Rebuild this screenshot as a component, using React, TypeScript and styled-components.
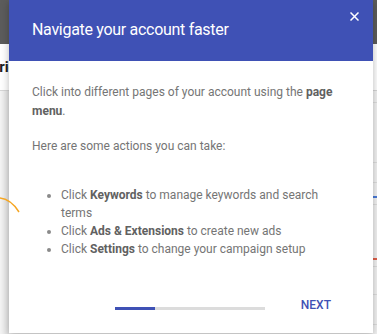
import React from 'react';
import styled, { createGlobalStyle } from 'styled-components';

const GlobalStyle = createGlobalStyle`
  html, body {
    margin: 0;
    padding: 0;
    background: #eeeeee;
    font-family: Roboto, "Noto Sans", Arial, sans-serif;
  }
`;

const Page = styled.div`
  position: relative;
  width: 377px;
  height: 334px;
  overflow: hidden;
  display: flex;
  flex-direction: column;
  background: #eeeeee;
`;

const TopBar = styled.div`
  height: 44px;
  background: #5c5c5c;
  flex-shrink: 0;
`;

const SubBar = styled.div`
  height: 46px;
  background: #ffffff;
  border-bottom: 1px solid #d6d6d6;
  display: flex;
  align-items: center;
  overflow: hidden;
  flex-shrink: 0;
`;

const SubTitle = styled.span`
  margin-left: -27px;
  font-size: 15px;
  font-weight: 700;
  color: #202020;
`;

const Content = styled.div`
  flex: 1;
  display: flex;
  justify-content: space-between;
`;

const LeftPane = styled.div`
  width: 9px;
  background: linear-gradient(to right, #f4f4f4, #e2e2e2);
`;

const RightPane = styled.div`
  width: 5px;
  background: #f2f2f2;
  display: flex;
  flex-direction: column;
`;

const Row = styled.div<{ h: number; tick?: string }>`
  height: ${p => p.h}px;
  border-bottom: 1px solid #dedede;
  box-sizing: border-box;
  display: flex;
  align-items: flex-end;
  &::after {
    content: '';
    display: ${p => (p.tick ? 'block' : 'none')};
    width: 5px;
    height: 2px;
    margin-bottom: 6px;
    background: ${p => p.tick};
  }
`;

const ChartArc = styled.svg`
  position: absolute;
  left: 0;
  top: 194px;
  z-index: 2;
`;

const Dialog = styled.div`
  position: absolute;
  top: 0;
  left: 9px;
  width: 364px;
  height: 333px;
  background: #ffffff;
  box-shadow: 0 2px 8px rgba(0, 0, 0, 0.28);
  display: flex;
  flex-direction: column;
`;

const Header = styled.div`
  height: 61px;
  background: #3f51b5;
  display: flex;
  align-items: center;
  padding: 0 7px 0 23px;
  flex-shrink: 0;
`;

const Title = styled.h2`
  flex: 1;
  margin: 0 0 3px;
  font-size: 16px;
  letter-spacing: -0.3px;
  font-weight: 400;
  color: #ffffff;
`;

const CloseButton = styled.button`
  align-self: flex-start;
  margin-top: 4px;
  width: 24px;
  height: 24px;
  border: none;
  padding: 0;
  background: transparent;
  display: flex;
  align-items: center;
  justify-content: center;
  cursor: pointer;
`;

const Body = styled.div`
  flex: 1;
  padding: 22px 30px 0 23px;
  color: #757575;
  font-size: 12px;
`;

const Para = styled.p<{ gap?: number }>`
  margin: ${p => p.gap ?? 0}px 0 0;
  line-height: 19px;
`;

const Strong = styled.b`
  font-weight: 700;
  color: #616161;
`;

const List = styled.ul`
  margin: 30px 0 0;
  padding-left: 29px;
  list-style: disc;
  & li::marker {
    color: #8a8a8a;
  }
`;

const Item = styled.li`
  line-height: 18px;
`;

const Footer = styled.div`
  display: flex;
  align-items: center;
  justify-content: flex-end;
  padding: 0 34px 10px 0;
`;

const Progress = styled.div`
  width: 150px;
  height: 3px;
  background: #dcdcdc;
  margin: 7px 28px 0 0;
  display: flex;
`;

const ProgressFill = styled.div`
  height: 100%;
  background: #3f51b5;
`;

const NextButton = styled.button`
  border: none;
  background: transparent;
  padding: 0 8px;
  height: 36px;
  font-family: Roboto, Arial, sans-serif;
  font-size: 12px;
  font-weight: 500;
  color: #3f51b5;
  text-transform: uppercase;
  cursor: pointer;
`;

export default function App() {
  const step = 1;
  const steps = 3.7;
  return (
    <>
      <GlobalStyle />
      <Page>
        <TopBar />
        <SubBar>
          <SubTitle>Metric</SubTitle>
        </SubBar>
        <Content>
          <LeftPane />
          <RightPane>
            <Row h={12} />
            <Row h={60} />
            <Row h={20} />
            <Row h={22} tick="#4a7bd8" />
            <Row h={62} tick="#e0604a" />
            <Row h={28} />
            <Row h={30} />
          </RightPane>
        </Content>
        <Dialog>
          <Header>
            <Title>Navigate your account faster</Title>
            <CloseButton aria-label="Close">
              <svg width="9" height="9" viewBox="0 0 9 9">
                <path d="M0.5 0.5 L8.5 8.5 M8.5 0.5 L0.5 8.5" stroke="#ffffff" strokeWidth="1.5" />
              </svg>
            </CloseButton>
          </Header>
          <Body>
            <Para>
              Click into different pages of your account using the <Strong>page menu</Strong>.
            </Para>
            <Para gap={16}>Here are some actions you can take:</Para>
            <List>
              <Item>
                Click <Strong>Keywords</Strong> to manage keywords and search terms
              </Item>
              <Item>
                Click <Strong>Ads &amp; Extensions</Strong> to create new ads
              </Item>
              <Item>
                Click <Strong>Settings</Strong> to change your campaign setup
              </Item>
            </List>
          </Body>
          <Footer>
            <Progress>
              <ProgressFill style={{ width: `${(step / steps) * 100}%` }} />
            </Progress>
            <NextButton>Next</NextButton>
          </Footer>
        </Dialog>
        <ChartArc width="22" height="22" viewBox="0 0 22 22">
          <path d="M-2 4 Q 10 4 19 18" fill="none" stroke="#f5a623" strokeWidth="1.5" />
        </ChartArc>
      </Page>
    </>
  );
}
